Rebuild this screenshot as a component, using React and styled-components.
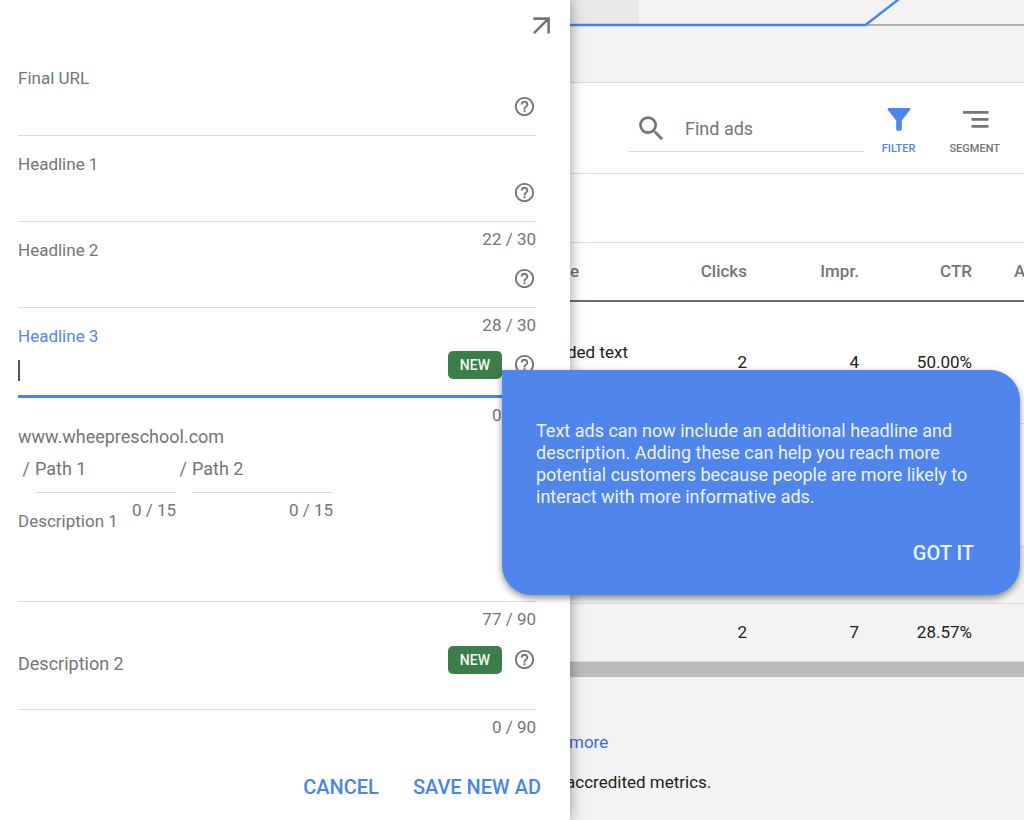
import { MdHelpOutline, MdSearch } from "react-icons/md"
import styled, { createGlobalStyle } from "styled-components"

const GlobalStyle = createGlobalStyle`
  *, *::before, *::after {
    box-sizing: border-box;
  }
  body {
    margin: 0;
    background: #f3f3f3;
    color: #212121;
    font-family: Roboto, "Liberation Sans", sans-serif;
    font-size: 17px;
  }
  input, textarea, button {
    font: inherit;
    color: inherit;
    border: none;
    background: none;
    padding: 0;
    outline: none;
  }
  button {
    cursor: pointer;
  }
`

const Page = styled.div`
  position: relative;
  display: grid;
  grid-template-columns: 570px minmax(0, 1fr);
  min-height: 100vh;
  overflow: hidden;
`

/* ---------- ad form panel ---------- */

const Panel = styled.form`
  position: relative;
  z-index: 1;
  padding: 0 34px 0 18px;
  background: #fff;
  color: #757575;
  box-shadow: 0 0 14px rgba(0, 0, 0, 0.4);
`
const PanelHeader = styled.div`
  display: flex;
  justify-content: flex-end;
  height: 50px;
  padding-top: 16px;
  margin-right: -15px;
`
const OpenButton = styled.button`
  display: flex;
  width: 19px;
  height: 19px;
`
const Field = styled.div`
  padding: 16px 0 ${({ $focused }) => ($focused ? 15 : 13)}px;
  border-bottom: ${({ $focused }) =>
    $focused ? "3px solid #4384f3" : "1px solid #dcdcdc"};
`
const Label = styled.label`
  display: block;
  line-height: 24px;
  color: ${({ $focused }) => ($focused ? "#5287ef" : "#757575")};
`
const FieldRow = styled.div`
  display: flex;
  align-items: center;
  height: 32px;
`
const TextInput = styled.input`
  flex: 1;
  min-width: 0;
  height: 32px;
  color: #212121;
  &::placeholder {
    color: #757575;
    opacity: 1;
  }
`
const Caret = styled.span`
  width: 2px;
  height: 21px;
  margin-top: 12px;
  background: #555;
`
const HelpButton = styled.button`
  display: flex;
  color: #757575;
  font-size: 23px;
`
const NewBadge = styled.span`
  margin: 2px 11px 0 0;
  padding: 0 12px;
  border-radius: 5px;
  background: #3a7f49;
  color: #f4f8f4;
  font-size: 14px;
  font-weight: 500;
  line-height: 28px;
`
/* hangs under the line and takes no room from the next field */
const Counter = styled.div`
  height: 20px;
  margin: 7px 0 -27px;
  line-height: 20px;
  text-align: right;
`
const Domain = styled.div`
  margin-top: 27px;
  font-size: 18px;
  line-height: 24px;
`
const PathRow = styled.div`
  display: flex;
  font-size: 18px;
`
const Slash = styled.span`
  width: 17px;
  padding-right: 5px;
  line-height: 40px;
  text-align: right;
`
const PathField = styled.div`
  width: 141px;
  & + ${Slash} {
    width: 16px;
  }
`
const PathInput = styled(TextInput)`
  display: block;
  width: 100%;
  height: 44px;
  padding-bottom: 4px;
  border-bottom: 1px solid #dcdcdc;
`
const PathCounter = styled(Counter)`
  font-size: 17px;
`
const TextArea = styled.textarea`
  display: block;
  width: 100%;
  height: 55px;
  resize: none;
  color: #212121;
`
const DescriptionRow = styled(FieldRow)`
  height: 78px;
  padding-top: 4px;
`
const DescriptionInput = styled(TextInput)`
  padding-top: 8px;
  font-size: 18px;
`
const Actions = styled.div`
  display: flex;
  justify-content: flex-end;
  gap: 34px;
  margin: 65px -5px 0 0;
`
const TextButton = styled.button`
  color: #4a84ee;
  font-size: 20px;
  font-weight: 500;
  line-height: 24px;
`

/* ---------- ads table behind the panel ---------- */

const Main = styled.main`
  min-width: 0;
  margin-left: -4px;
`
const ChartStrip = styled.div`
  height: 83px;
  border-bottom: 1px solid #dcdcdc;
  svg {
    display: block;
    width: 100%;
    height: 27px;
  }
`
const Toolbar = styled.div`
  display: flex;
  align-items: flex-start;
  gap: 18px;
  height: 91px;
  padding: 23px 24px 0 63px;
  border-bottom: 1px solid #dcdcdc;
  background: #fff;
`
const SearchBox = styled.label`
  display: flex;
  flex: 1;
  align-items: center;
  min-width: 0;
  height: 46px;
  padding-left: 6px;
  border-bottom: 1px solid #dcdcdc;
  color: #757575;
  svg {
    flex: none;
    margin-right: 17px;
    font-size: 33px;
  }
`
const SearchInput = styled(TextInput)`
  font-size: 18px;
`
const ToolButtons = styled.div`
  display: flex;
  gap: 34px;
`
const ToolButton = styled.button`
  display: flex;
  flex-direction: column;
  align-items: center;
  gap: 7px;
  color: ${({ $active }) => ($active ? "#4f85ec" : "#757575")};
  font-size: 11px;
  font-weight: 500;
  line-height: 16px;
`
const FilterBar = styled.div`
  height: 69px;
  border-bottom: 1px solid #dcdcdc;
  background: #fff;
`
const Table = styled.table`
  width: 100%;
  table-layout: fixed;
  border-collapse: separate;
  border-spacing: 0;
  background: #fff;
  line-height: 20px;
`
const HeadCell = styled.th`
  width: ${({ $width }) => ($width ? `${$width}px` : "auto")};
  height: 59px;
  padding: 0 0 2px ${({ $indent }) => $indent || 0}px;
  border-bottom: 2px solid #6b6b6b;
  color: #757575;
  font-weight: 500;
  text-align: ${({ $left }) => ($left ? "left" : "right")};
  white-space: nowrap;
  overflow: hidden;
`
const BodyRow = styled.tr`
  height: ${({ $height }) => $height}px;
  background: ${({ $shaded }) => ($shaded ? "#f3f3f3" : "#fff")};
`
const Cell = styled.td`
  padding: 0 0 2px;
  border-bottom: 1px solid #dcdcdc;
  text-align: right;
`
const TypeCell = styled(Cell)`
  padding: 0 0 22px 1px;
  text-align: left;
  white-space: nowrap;
`
const ScrollBar = styled.div`
  height: 15px;
  background: #bcbcbc;
`
const Footer = styled.footer`
  padding-top: 45px;
  line-height: 40px;
  p {
    margin: 0;
  }
`
const MoreLink = styled.a`
  padding-left: 3px;
  color: #3f69cf;
  text-decoration: none;
`

/* ---------- promo callout ---------- */

const Callout = styled.aside`
  position: absolute;
  z-index: 2;
  top: 370px;
  left: 502px;
  right: 4px;
  display: flex;
  flex-direction: column;
  align-items: flex-end;
  padding: 50px 34px 30px;
  border-radius: 0 30px 30px 30px;
  background: #5085eb;
  color: #edf3fd;
  box-shadow: 0 3px 7px rgba(0, 0, 0, 0.45);
  p {
    width: 100%;
    margin: 0 0 33px;
    font-size: 18px;
    line-height: 22px;
  }
`
const GotItButton = styled(TextButton)`
  margin-right: 12px;
  color: #edf3fd;
`

const ArrowIcon = () => (
  <svg width="19" height="19" viewBox="0 0 19 19" fill="none" stroke="#757575" strokeWidth="2.6">
    <path d="M1.4 2.6H16.6V17.4M16 3.2L2 17.2" />
  </svg>
)

const FilterIcon = () => (
  <svg width="28" height="28" viewBox="0 0 28 28" fill="currentColor">
    <path d="M3.6 2H24.4Q26 2.2 25.3 3.7L16.8 14.4V23.2Q16.7 24.8 15.2 24.8H12.9Q11.3 24.8 11.2 23.2V14.4L2.7 3.7Q2 2.2 3.6 2Z" />
  </svg>
)

const SegmentIcon = () => (
  <svg width="28" height="28" viewBox="0 0 28 28" stroke="currentColor" strokeWidth="2.6">
    <path d="M2 6.4H27.500M10.500 13.4H27.500M10.500 20.4H27.500" />
  </svg>
)

const Help = ({ topic }) => (
  <HelpButton type="button" aria-label={`Help: ${topic}`}>
    <MdHelpOutline />
  </HelpButton>
)

const HEADLINES = [
  { id: "url", label: "Final URL" },
  { id: "headline1", label: "Headline 1", count: "22 / 30" },
  { id: "headline2", label: "Headline 2", count: "28 / 30" },
  { id: "headline3", label: "Headline 3", count: "0 / 30", isNew: true, focused: true },
]

const ROWS = [
  { type: "ded text", clicks: "2", impr: "4", ctr: "50.00%", height: 122 },
  { height: 123 },
  { height: 57, shaded: true },
  { clicks: "2", impr: "7", ctr: "28.57%", height: 58, shaded: true },
]

const AdForm = () => (
  <Panel onSubmit={(e) => e.preventDefault()}>
    <PanelHeader>
      <OpenButton type="button" aria-label="Open full view">
        <ArrowIcon />
      </OpenButton>
    </PanelHeader>
    {HEADLINES.map(({ id, label, count, isNew, focused }) => (
      <div key={id}>
        <Field $focused={focused}>
          <Label htmlFor={id} $focused={focused}>
            {label}
          </Label>
          <FieldRow>
            {focused && <Caret />}
            <TextInput id={id} />
            {isNew && <NewBadge>NEW</NewBadge>}
            <Help topic={label} />
          </FieldRow>
        </Field>
        {count && <Counter>{count}</Counter>}
      </div>
    ))}
    <Domain>www.wheepreschool.com</Domain>
    <PathRow>
      <Slash>/</Slash>
      <PathField>
        <PathInput placeholder="Path 1" aria-label="Path 1" />
        <PathCounter>0 / 15</PathCounter>
      </PathField>
      <Slash>/</Slash>
      <PathField>
        <PathInput placeholder="Path 2" aria-label="Path 2" />
        <PathCounter>0 / 15</PathCounter>
      </PathField>
    </PathRow>
    <Field>
      <Label htmlFor="description1">Description 1</Label>
      <TextArea id="description1" />
    </Field>
    <Counter>77 / 90</Counter>
    <Field>
      <DescriptionRow>
        <DescriptionInput placeholder="Description 2" aria-label="Description 2" />
        <NewBadge>NEW</NewBadge>
        <Help topic="Description 2" />
      </DescriptionRow>
    </Field>
    <Counter>0 / 90</Counter>
    <Actions>
      <TextButton type="button">CANCEL</TextButton>
      <TextButton type="submit">SAVE NEW AD</TextButton>
    </Actions>
  </Panel>
)

const AdsTable = () => (
  <Table>
    <thead>
      <tr>
        <HeadCell $left $width={68} $indent={4}>e</HeadCell>
        <HeadCell $width={113}>Clicks</HeadCell>
        <HeadCell $width={112}>Impr.</HeadCell>
        <HeadCell $width={113}>CTR</HeadCell>
        <HeadCell $left $indent={42}>A</HeadCell>
      </tr>
    </thead>
    <tbody>
      {ROWS.map((row, index) => (
        <BodyRow key={index} $height={row.height} $shaded={row.shaded}>
          <TypeCell>{row.type}</TypeCell>
          <Cell>{row.clicks}</Cell>
          <Cell>{row.impr}</Cell>
          <Cell>{row.ctr}</Cell>
          <Cell />
        </BodyRow>
      ))}
    </tbody>
  </Table>
)

const App = () => (
  <>
    <GlobalStyle />
    <Page>
      <AdForm />
      <Main>
        <ChartStrip>
          <svg viewBox="0 0 458 27" preserveAspectRatio="xMinYMin slice">
            <rect width="73" height="24" fill="#e9e9e9" />
            <path d="M299 25H458" stroke="#9a9a9a" strokeWidth="1.4" />
            <path d="M0 25H299.500L333 -1" fill="none" stroke="#4a82ec" strokeWidth="2.4" />
          </svg>
        </ChartStrip>
        <Toolbar>
          <SearchBox>
            <MdSearch />
            <SearchInput placeholder="Find ads" aria-label="Find ads" />
          </SearchBox>
          <ToolButtons>
            <ToolButton type="button" $active>
              <FilterIcon />
              FILTER
            </ToolButton>
            <ToolButton type="button">
              <SegmentIcon />
              SEGMENT
            </ToolButton>
          </ToolButtons>
        </Toolbar>
        <FilterBar />
        <AdsTable />
        <ScrollBar />
        <Footer>
          <p>
            <MoreLink href="#more">more</MoreLink>
          </p>
          <p>accredited metrics.</p>
        </Footer>
      </Main>
      <Callout>
        <p>
          Text ads can now include an additional headline and description.
          Adding these can help you reach more potential customers because
          people are more likely to interact with more informative ads.
        </p>
        <GotItButton type="button">GOT IT</GotItButton>
      </Callout>
    </Page>
  </>
)

export default App
